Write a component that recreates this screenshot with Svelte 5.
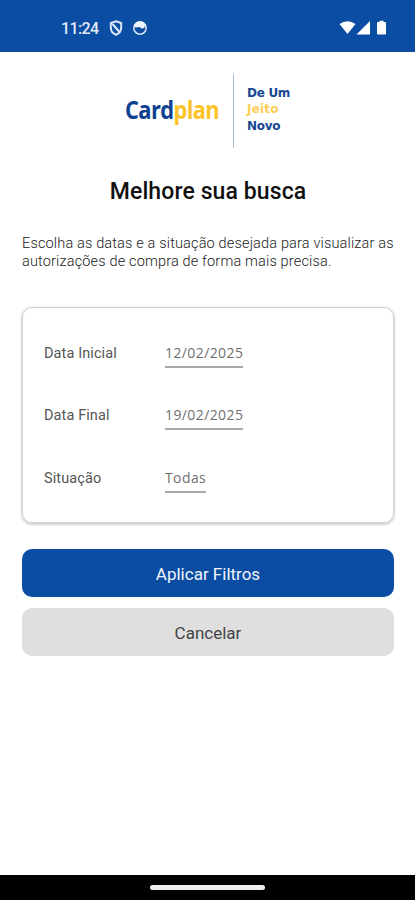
<script lang="ts">
  let filters = $state([
    { label: "Data Inicial", value: "12/02/2025" },
    { label: "Data Final", value: "19/02/2025" },
    { label: "Situação", value: "Todas" }
  ]);
</script>

<div class="screen">
  <header class="status_bar">
    <div class="status_left">
      <span class="clock">11:24</span>
      <svg class="shield" width="14" height="16" viewBox="0 0 14 16">
        <path d="M7 1.2 L12.2 3 V7.5 C12.2 11 10 13.6 7 14.8 C4 13.6 1.8 11 1.8 7.5 V3 Z" />
        <path d="M3.5 4 L10.5 12" />
      </svg>
      <svg class="face" width="16" height="16" viewBox="0 0 16 16">
        <circle cx="8" cy="8" r="6.2" />
        <path d="M2 6.5 C3 2.5 6 1.6 8 1.6 C11 1.6 13.5 3.5 14 6.5 L12.5 6 V8 L9.5 8.6 L7.5 7 L4 7.5 Z" />
      </svg>
    </div>
    <svg class="status_right" width="50" height="16" viewBox="0 0 50 16">
      <path d="M0.5 4 Q8.5 -1.5 16.5 4 L8.5 14 Z" />
      <path d="M31 1 V14.5 H17.5 Z" />
      <path d="M39 2 H40.5 V0.8 H44.5 V2 H46 Q47 2 47 3 V13.5 Q47 14.5 46 14.5 H39 Q38 14.5 38 13.5 V3 Q38 2 39 2 Z" />
    </svg>
  </header>

  <main>
    <div class="logo">
      <div class="brand">Card<span>plan</span></div>
      <div class="slogan">
        <span>De Um</span>
        <span class="yellow">Jeito</span>
        <span>Novo</span>
      </div>
    </div>

    <h1>Melhore sua busca</h1>
    <p>
      Escolha as datas e a situação desejada para visualizar as<br />
      autorizações de compra de forma mais precisa.
    </p>

    <div class="filters_card">
      {#each filters as filter (filter.label)}
        <div class="filter_row">
          <span class="filter_label">{filter.label}</span>
          <span class="filter_value">{filter.value}</span>
        </div>
      {/each}
    </div>

    <button class="apply">Aplicar Filtros</button>
    <button class="cancel">Cancelar</button>
  </main>

  <footer class="nav_bar"><div class="handle"></div></footer>
</div>

<style>
  :global(body) {
    background: #fff;
  }
  .screen {
    display: flex;
    flex-direction: column;
    width: 415px;
    height: 900px;
    overflow: hidden;
    background: #fff;
    font-family: Roboto, "Liberation Sans", sans-serif;
  }
  .status_bar {
    box-sizing: border-box;
    display: flex;
    justify-content: space-between;
    flex: none;
    height: 52px;
    padding: 20px 26px 0 61px;
    background: #0b4da2;
  }
  .status_left {
    display: flex;
    height: 16px;
  }
  .clock {
    width: 48px;
    font-size: 16px;
    font-weight: 500;
    line-height: 17px;
    letter-spacing: -0.6px;
    color: #e3eafa;
  }
  .shield {
    fill: none;
    stroke: #dce6fa;
    stroke-width: 2;
  }
  .face {
    margin-left: 9px;
    fill: none;
    stroke: #dce6fa;
    stroke-width: 1.5;
  }
  .face path {
    fill: #eef3fc;
    stroke: none;
  }
  .status_right {
    fill: #fff;
  }
  main {
    display: flex;
    flex-direction: column;
    flex: 1;
    padding: 22px 21px 0 22px;
  }
  .logo {
    display: flex;
    height: 74px;
    padding-left: 103px;
  }
  .brand {
    width: 108px;
    font-family: "Open Sans", "Noto Sans", sans-serif;
    font-size: 25px;
    font-weight: 700;
    line-height: 70px;
    letter-spacing: -0.7px;
    color: #0b4190;
    transform: scaleX(0.875);
    transform-origin: 0 50%;
  }
  .brand span {
    color: #fcc328;
  }
  .slogan {
    display: flex;
    flex-direction: column;
    padding: 11px 0 0 13px;
    border-left: 1px solid #a9bcd6;
    font-family: "DejaVu Sans", sans-serif;
    font-size: 12px;
    font-weight: 700;
    line-height: 16.3px;
    letter-spacing: -0.3px;
    color: #174792;
  }
  .slogan .yellow {
    letter-spacing: 0.2px;
    color: #fdce55;
  }
  h1 {
    margin: 28px 0 0;
    font-size: 23px;
    font-weight: 500;
    line-height: 32px;
    letter-spacing: 0.1px;
    text-align: center;
    color: #101010;
  }
  p {
    margin: 27px 0 0;
    font-size: 14.5px;
    font-weight: 300;
    line-height: 17.5px;
    letter-spacing: 0.16px;
    white-space: nowrap;
    color: #222;
  }
  .filters_card {
    box-sizing: border-box;
    height: 216px;
    margin-top: 37px;
    padding: 14px 20px 14px 21px;
    border: 1px solid #d4d4d4;
    border-radius: 10px;
    box-shadow: 0 1px 2px 1px #d4d4d4;
  }
  .filter_row {
    display: flex;
    align-items: center;
    height: 62.5px;
  }
  .filter_label {
    width: 121px;
    font-size: 14.5px;
    letter-spacing: 0.1px;
    color: #555;
  }
  .filter_value {
    padding: 3px 0;
    border-bottom: 2px solid #aaa;
    font-family: "Open Sans", "Noto Sans", sans-serif;
    font-size: 14px;
    line-height: 21px;
    letter-spacing: 0.4px;
    color: #707070;
  }
  button {
    height: 48px;
    padding: 2px 0 0;
    border: 0;
    border-radius: 10px;
    font-family: inherit;
    font-size: 17px;
  }
  .apply {
    margin-top: 26px;
    background: #0b4da2;
    color: #f2f5fd;
  }
  .cancel {
    margin-top: 11px;
    background: #dfdfdf;
    color: #444;
  }
  .nav_bar {
    display: flex;
    justify-content: center;
    flex: none;
    height: 25px;
    background: #000;
  }
  .handle {
    width: 115px;
    height: 5px;
    margin-top: 10px;
    border-radius: 3px;
    background: #eee;
  }
</style>
